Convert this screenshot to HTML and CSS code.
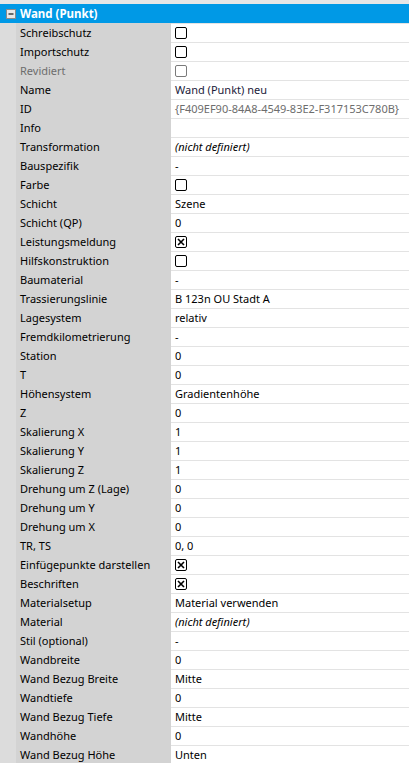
FILE: index.html
```html
<!DOCTYPE html>
<html lang="de">
<head>
  <meta charset="UTF-8" />
  <title>Eigenschaften</title>
  <link rel="stylesheet" href="styles.css">
</head>
<body>
  <div class="topband"></div>
  <div class="group">
    <svg class="toggle" width="10" height="10" viewBox="0 0 10 10"><rect x="0.5" y="0.5" width="9" height="9" fill="#e8e8e8" stroke="#8a8a8a"/><line x1="2.5" y1="5" x2="7.5" y2="5" stroke="#333" stroke-width="1.4"/></svg>
    <span>Wand (Punkt)</span>
  </div>
  <div class="props" id="props"></div>
  <script>
    var rows = [
      ['Schreibschutz', 'box'],
      ['Importschutz', 'box'],
      ['Revidiert', 'box', 'dim'],
      ['Name', 'Wand (Punkt) neu', 'name'],
      ['ID', '{F409EF90-84A8-4549-83E2-F317153C780B}', 'dimval'],
      ['Info', ''],
      ['Transformation', '(nicht definiert)', 'undef'],
      ['Bauspezifik', '-'],
      ['Farbe', 'box'],
      ['Schicht', 'Szene'],
      ['Schicht (QP)', '0'],
      ['Leistungsmeldung', 'check'],
      ['Hilfskonstruktion', 'box'],
      ['Baumaterial', '-'],
      ['Trassierungslinie', 'B 123n OU Stadt A'],
      ['Lagesystem', 'relativ'],
      ['Fremdkilometrierung', '-'],
      ['Station', '0'],
      ['T', '0'],
      ['Höhensystem', 'Gradientenhöhe'],
      ['Z', '0'],
      ['Skalierung X', '1'],
      ['Skalierung Y', '1'],
      ['Skalierung Z', '1'],
      ['Drehung um Z (Lage)', '0'],
      ['Drehung um Y', '0'],
      ['Drehung um X', '0'],
      ['TR, TS', '0, 0'],
      ['Einfügepunkte darstellen', 'check'],
      ['Beschriften', 'check'],
      ['Materialsetup', 'Material verwenden'],
      ['Material', '(nicht definiert)', 'undef'],
      ['Stil (optional)', '-'],
      ['Wandbreite', '0'],
      ['Wand Bezug Breite', 'Mitte'],
      ['Wandtiefe', '0'],
      ['Wand Bezug Tiefe', 'Mitte'],
      ['Wandhöhe', '0'],
      ['Wand Bezug Höhe', 'Unten']
    ];
    var box = '<svg class="cb" width="12" height="12" viewBox="0 0 12 12"><rect x="0.5" y="0.5" width="11" height="11" rx="1.5" fill="#fff" stroke="currentColor"/></svg>';
    var check = '<svg class="cb" width="12" height="12" viewBox="0 0 12 12"><rect x="0.5" y="0.5" width="11" height="11" rx="1.5" fill="#fff" stroke="currentColor"/><path d="M3 3L9 9M9 3L3 9" stroke="currentColor" stroke-width="1.6"/></svg>';
    var html = '';
    rows.forEach(function (r) {
      var cls = r[2] || '';
      var val = r[1] == 'box' ? box : r[1] == 'check' ? check : r[1];
      html += '<div class="row ' + cls + '"><div class="gutter"></div><div class="label">' + r[0] + '</div><div class="value">' + val + '</div></div>';
    });
    document.getElementById('props').innerHTML = html;
  </script>
</body>
</html>
```

FILE: styles.css
```css
body { margin:0; background:#fff; font-family:"Noto Sans", Arial, sans-serif; font-size:11px; color:#000; overflow:hidden; height:763px; }
.topband { height:4px; background:#e6e6e6; }
.group { height:19px; background:#0099e6; color:#fff; font-weight:bold; font-size:11.5px; display:flex; align-items:center; }
.group .toggle { margin:0 4px 0 6px; }
.props { display:flex; flex-direction:column; }
.row { display:grid; grid-template-columns:16px 155px 1fr; height:19px; }
.gutter { background:#dcdcdc; }
.label { background:#d3d3d3; padding-left:4px; line-height:19px; white-space:nowrap; overflow:hidden; }
.value { border-top:1px solid #e3e3e3; padding-left:4px; line-height:18px; white-space:nowrap; overflow:hidden; display:flex; align-items:center; }
.cb { color:#000; }
.row.dim .label { color:#6d6d6d; }
.row.dim .cb { color:#7a7a7a; }
.row.dimval .value { color:#6d6d6d; }
.row.name .value { color:#1a1a3a; }
.row.undef .value { font-style:italic; }
```
